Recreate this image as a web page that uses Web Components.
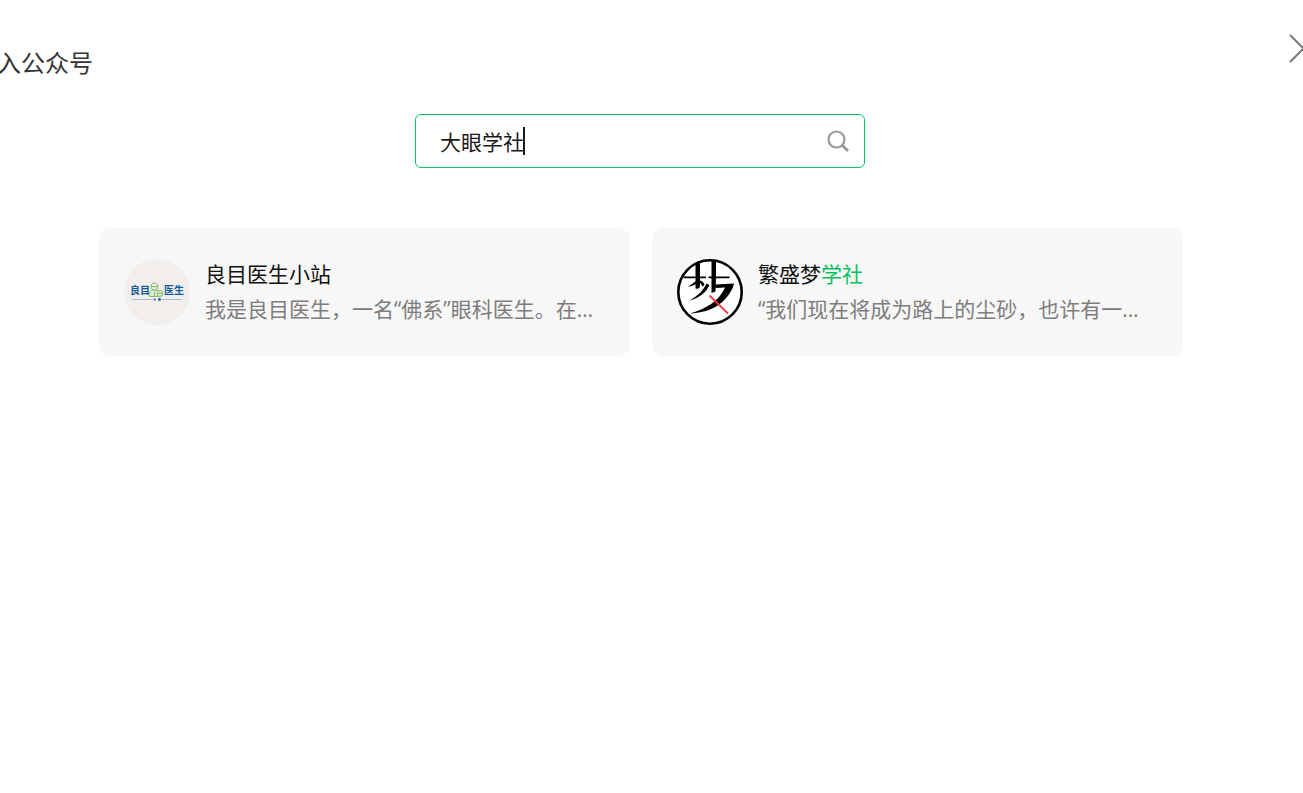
<!DOCTYPE html>
<html lang="zh-CN">
<head>
<meta charset="utf-8">
<title>公众号</title>
<style>
  html, body { margin: 0; background: #fff; overflow-x: hidden; }
  body { font: 21px/35px "Open Sans", "Noto Sans CJK SC", sans-serif; font-weight: 400; color: #111; }
</style>
</head>
<body>
<account-dialog>
  <span slot="title">入公众号</span>
  <account-search slot="search" value="大眼学社"></account-search>
  <account-card>
    <doctor-avatar slot="avatar"></doctor-avatar>
    <span slot="name">良目医生小站</span>
    <span slot="intro">我是良目医生，一名“佛系”眼科医生。在…</span>
  </account-card>
  <account-card>
    <dream-avatar slot="avatar"></dream-avatar>
    <span slot="name">繁盛梦<hit-text>学社</hit-text></span>
    <span slot="intro">“我们现在将成为路上的尘砂，也许有一…</span>
  </account-card>
</account-dialog>

<script>
const define = (name, html, setup) => customElements.define(name, class extends HTMLElement {
  constructor() {
    super();
    const t = document.createElement('template');
    t.innerHTML = html;
    this.attachShadow({ mode: 'open' }).append(t.content.cloneNode(true));
  }
  connectedCallback() { if (setup) setup(this); }
});

define('hit-text', `<style>:host { display: inline; color: #07c160; }</style><slot></slot>`);

define('account-search', `
  <style>
    :host { display: block; position: relative; width: 450px; max-width: 100%; }
    .box { display: flex; align-items: center; box-sizing: border-box; height: 54px;
           padding: 0 14px 0 24px; border: 1px solid #07c160; border-radius: 6px; background: #fff; }
    input { flex: 1; min-width: 0; height: 50px; padding: 0; border: 0; outline: 0; background: none;
            font: inherit; color: #1a1a1a; caret-color: transparent; }
    button { display: flex; padding: 0; border: 0; background: none; }
    .caret { position: absolute; left: 108px; top: 13px; width: 2px; height: 28px; background: #1a1a1a; }
  </style>
  <div class="box">
    <input type="text" aria-label="搜索公众号">
    <button type="button" aria-label="搜索">
      <svg width="24" height="24" viewBox="0 0 24 24" fill="none" stroke="#9a9a9a" stroke-width="2.200">
        <circle cx="10.500" cy="10.500" r="8"/><path d="M16.200 16.200 22 22" stroke-width="3"/>
      </svg>
    </button>
  </div>
  <i class="caret"></i>`,
  el => { el.shadowRoot.querySelector('input').value = el.getAttribute('value') || ''; });

define('account-card', `
  <style>
    :host { display: flex; align-items: center; gap: 15px; min-width: 0; box-sizing: border-box;
            padding: 29px 25px; border-radius: 12px; background: #f7f7f7; }
    .text { flex: 1; min-width: 0; }
    .text > div { overflow: hidden; white-space: nowrap; }
    .intro { color: #7d7d7d; }
  </style>
  <slot name="avatar"></slot>
  <div class="text">
    <div><slot name="name"></slot></div>
    <div class="intro"><slot name="intro"></slot></div>
  </div>`);

define('doctor-avatar', `
  <style>:host { display: block; flex: none; width: 66px; height: 66px; } svg { display: block; }
    text { font: 700 10px "Noto Sans CJK SC", sans-serif; fill: #145a9e; }</style>
  <svg width="66" height="66" viewBox="0 0 66 66">
    <circle cx="33" cy="33" r="33" fill="#f2eeeb"/>
    <text x="6" y="35">良目</text><text x="40" y="35">医生</text>
    <g fill="#dcebd2" stroke="#86bb70" stroke-width="1">
      <path d="M25.500 37.500c-1-5 2-6.500 5-6.500s5 2 5 6.500z"/>
      <circle cx="30.500" cy="28" r="3.200"/>
      <path d="M27 27.500c0-4.500 7-4.500 7 0z" fill="#f2eeeb"/>
      <circle cx="36" cy="34.500" r="3"/>
      <path d="M34 34.500h4M30.500 33v4" fill="none"/>
    </g>
    <path d="M8 40.500h21M38 40.500h20" stroke="#a9bccd" stroke-width="1"/>
    <circle cx="30.700" cy="40.500" r="1" fill="#145a9e"/><circle cx="35.500" cy="40.500" r="1.400" fill="#145a9e"/>
  </svg>`);

define('dream-avatar', `
  <style>:host { display: block; flex: none; width: 66px; height: 66px; } svg { display: block; }</style>
  <svg width="66" height="66" viewBox="0 0 66 66">
    <circle cx="33" cy="33" r="31.700" fill="#fff" stroke="#000" stroke-width="2.600"/>
    <g fill="#000">
      <path d="M18.500 3.500 23 2v25c0 2.500-2 3-4.500 2.500z"/>
      <path d="M34.500 2h4.500v17l-.5 13.500-4 1.500z"/>
      <path d="M6.500 17.500h22.500v1.800H6.500zM31.500 17.500h21v1.800h-21z"/>
      <path d="M19 22c-3 2-5 4-8 5.500 4-.2 6-1.500 8.500-2.500z"/>
      <path d="M23 21.500c2 .5 4 2 4.500 4.500l-2 1.500c-1-1-1.500-3-2.500-4z"/>
      <path d="M29.500 24.500 32.500 26c-3.500 8-10.500 13-20 15.500 8-4.500 13.500-9.500 17-17z"/>
      <path d="M38.500 25.500 57 24.500l-1 3.500C49 44 35 53.500 12.500 54.500 29 50 42 42 48 28.500l-9.500.5z"/>
    </g>
    <path d="m32.500 36.500 18.500 18" stroke="#f23b3b" stroke-width="1.800"/>
  </svg>`);

define('account-dialog', `
  <style>
    :host { display: block; }
    header { display: flex; justify-content: space-between; align-items: flex-start; padding-top: 34px; overflow: hidden; }
    h1 { margin: 12px 0 0 -3px; font: inherit; font-size: 24px; line-height: 34px; color: #333; }
    button { display: flex; justify-content: flex-start; width: 14px; height: 29px; padding: 0; border: 0; background: none; overflow: hidden; }
    svg { flex: none; }
    .search { display: flex; justify-content: center; padding: 34px 23px 0 0; }
    .list { display: grid; grid-template-columns: repeat(2, minmax(0, 1fr)); gap: 22px; padding: 60px 120px 0 99px; }
  </style>
  <header>
    <h1><slot name="title"></slot></h1>
    <button type="button" aria-label="关闭">
      <svg width="29" height="29" viewBox="0 0 29 29" fill="none" stroke="#7a7a7a" stroke-width="2">
        <path d="m1 1 27 27M28 1 1 28"/>
      </svg>
    </button>
  </header>
  <div class="search"><slot name="search"></slot></div>
  <main class="list"><slot></slot></main>`);
</script>
</body>
</html>
